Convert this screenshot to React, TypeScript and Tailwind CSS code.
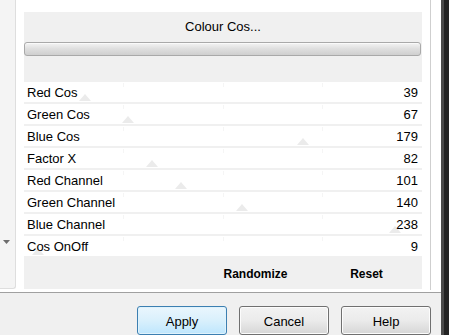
import React from "react";

const rows: { label: string; value: number }[] = [
  { label: "Red Cos", value: 39 },
  { label: "Green Cos", value: 67 },
  { label: "Blue Cos", value: 179 },
  { label: "Factor X", value: 82 },
  { label: "Red Channel", value: 101 },
  { label: "Green Channel", value: 140 },
  { label: "Blue Channel", value: 238 },
  { label: "Cos OnOff", value: 9 },
];

function Row({ label, value }: { label: string; value: number }) {
  const x = (value / 255) * 397;
  return (
    <div className="relative h-[20px] mb-[2px] bg-white flex items-center justify-between pl-[3px] pr-[4px] text-[13px] text-black leading-none">
      {[99, 199, 298].map((t) => (
        <div key={t} className="absolute top-[1px] w-px h-[4px] bg-[#f5f5f5]" style={{ left: t }} />
      ))}
      <svg
        className="absolute top-[12px]"
        style={{ left: x - 6 }}
        width="12"
        height="7"
        viewBox="0 0 12 7"
      >
        <polygon points="6,0 12,7 0,7" fill="#ebebeb" />
      </svg>
      <span className="relative">{label}</span>
      <span className="relative">{value}</span>
    </div>
  );
}

function Btn({ label, primary }: { label: string; primary?: boolean }) {
  return (
    <div
      className={
        "w-[90px] h-[29px] rounded-[3px] border flex items-center justify-center text-[13px] text-black " +
        (primary
          ? "border-[#3c7fb1] bg-gradient-to-b from-[#eaf6fd] via-[#d9f0fc] to-[#bee6fd] shadow-[inset_0_0_0_1px_#dff2fc]"
          : "border-[#707070] bg-gradient-to-b from-[#f2f2f2] via-[#ebebeb] to-[#d6d6d6] shadow-[inset_0_0_0_1px_#fcfcfc]")
      }
    >
      <span className="pt-[2px]">{label}</span>
    </div>
  );
}

export default function App() {
  return (
    <div
      className="w-[449px] h-[335px] overflow-hidden flex bg-white"
      style={{ fontFamily: '"Liberation Sans", Arial, sans-serif' }}
    >
      <div className="w-[441px] flex flex-col">
        <div className="h-[297px] flex">
          <div className="w-[16px] h-[289px] bg-[#f4f4f4] border-r border-b border-[#dedede] rounded-br-[3px] flex flex-col justify-end items-start pl-[3px] pb-[44px]">
            <svg width="7" height="4" viewBox="0 0 7 4">
              <polygon points="0,0 7,0 3.5,4" fill="#6d6d6d" />
            </svg>
          </div>
          <div className="ml-[8px] mt-[12px] w-[398px] h-[277px] bg-[#f0f0f0] flex flex-col">
            <div className="h-[30px] flex items-center justify-center text-[13px] text-black">
              Colour Cos...
            </div>
            <div className="h-[14px] w-[397px] rounded-[3px] border border-[#a9a9a9] bg-gradient-to-b from-[#f4f4f4] via-[#dedede] to-[#cfcfcf] shadow-[inset_0_1px_0_#fafafa]" />
            <div className="h-[26px]" />
            {rows.map((r) => (
              <Row key={r.label} label={r.label} value={r.value} />
            ))}
            <div className="flex-1 flex items-center justify-end text-[12px] font-bold text-black">
              <div className="w-[111px] text-center">Randomize</div>
              <div className="w-[111px] text-center">Reset</div>
            </div>
          </div>
          <div className="ml-[8px] w-px h-[290px] bg-[#cfcfcf]" />
        </div>
        <div className="h-px bg-[#a0a0a0]" />
        <div className="flex-1 bg-[#f0f0f0] pt-[13px] pl-[137px] flex gap-[12px] items-start">
          <Btn label="Apply" primary />
          <Btn label="Cancel" />
          <Btn label="Help" />
        </div>
      </div>
      <div className="w-[3px] bg-[#4a4a4a]" />
      <div className="w-[5px] bg-[#232323]" />
    </div>
  );
}
